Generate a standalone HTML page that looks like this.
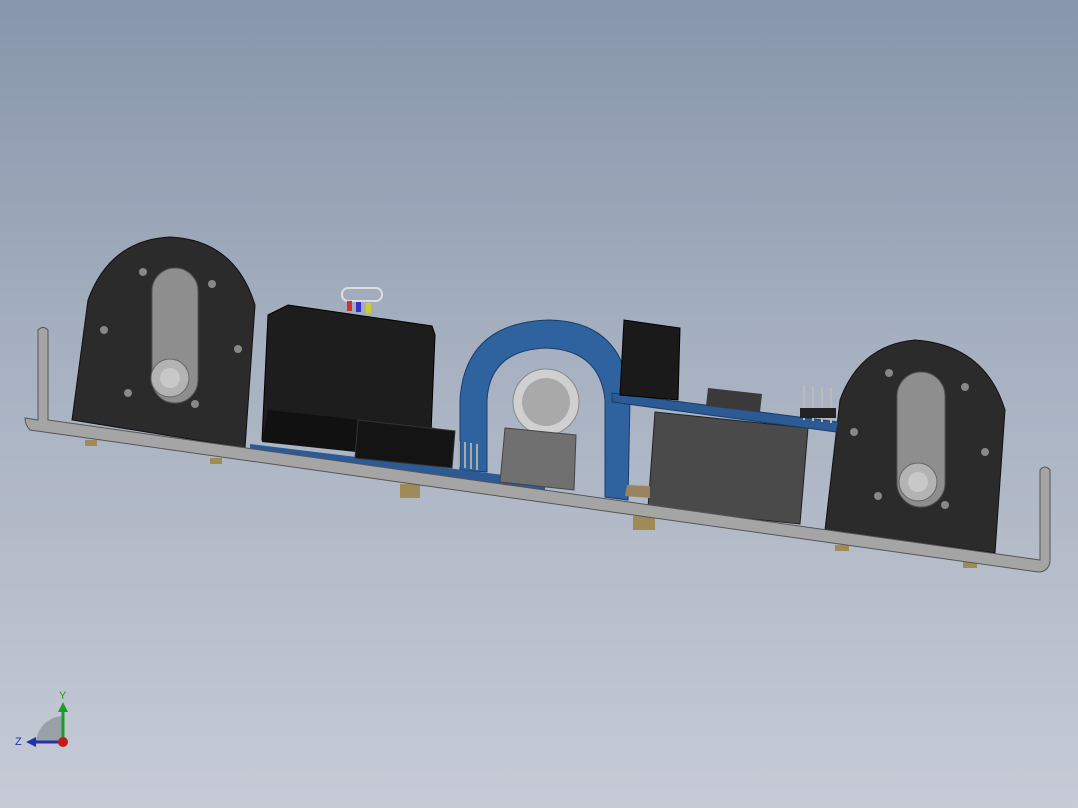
<!DOCTYPE html>
<html><head><style>
html,body{margin:0;padding:0}
body{width:1078px;height:808px;overflow:hidden;background:linear-gradient(#8796ab 0%,#a7b1c1 45%,#c6cbd6 100%);font-family:"Liberation Sans",sans-serif}
svg{position:absolute;left:0;top:0}
</style></head><body>
<svg width="1078" height="808" viewBox="0 0 1078 808">
<!-- left motor mount -->
<path d="M72,420 L88,300 Q110,240 170,237 Q235,240 255,305 L245,448 Z" fill="#2b2b2b" stroke="#111"/>
<rect x="152" y="268" width="46" height="135" rx="23" fill="#8e8e8e" stroke="#555"/>
<circle cx="170" cy="378" r="19" fill="#b3b3b3" stroke="#666"/><circle cx="170" cy="378" r="10" fill="#c8c8c8"/>
<g fill="#888"><circle cx="143" cy="272" r="4"/><circle cx="212" cy="284" r="4"/><circle cx="104" cy="330" r="4"/><circle cx="238" cy="349" r="4"/><circle cx="128" cy="393" r="4"/><circle cx="195" cy="404" r="4"/></g>
<!-- right motor mount -->
<path d="M825,530 L840,400 Q860,345 915,340 Q985,345 1005,410 L995,553 Z" fill="#2b2b2b" stroke="#111"/>
<rect x="897" y="372" width="48" height="135" rx="24" fill="#8e8e8e" stroke="#555"/>
<circle cx="918" cy="482" r="19" fill="#b3b3b3" stroke="#666"/><circle cx="918" cy="482" r="10" fill="#c8c8c8"/>
<g fill="#888"><circle cx="889" cy="373" r="4"/><circle cx="965" cy="387" r="4"/><circle cx="854" cy="432" r="4"/><circle cx="985" cy="452" r="4"/><circle cx="878" cy="496" r="4"/><circle cx="945" cy="505" r="4"/></g>
<!-- blue ring -->
<path d="M460,470 L460,400 Q465,322 550,320 Q625,322 630,400 L628,500 L605,497 L605,400 Q600,350 546,348 Q490,350 487,400 L487,472 Z" fill="#2f63a0" stroke="#1a3c66"/>
<circle cx="546" cy="402" r="33" fill="#d0d0d0" stroke="#888"/><circle cx="546" cy="402" r="24" fill="#a9a9a9"/>
<!-- blue PCB left -->
<path d="M250,444 L545,480 L545,490 L250,452 Z" fill="#2b5a95"/>
<!-- relay box -->
<path d="M288,305 L432,326 L435,335 L430,458 L262,440 L268,315 Z" fill="#1d1d1d" stroke="#000"/>
<path d="M268,410 L435,428 L432,460 L262,442 Z" fill="#111"/>
<path d="M358,420 L455,431 L452,468 L355,458 Z" fill="#141414" stroke="#333"/>
<rect x="342" y="288" width="40" height="13" rx="6" fill="none" stroke="#ddd" stroke-width="2"/>
<rect x="347" y="301" width="5" height="10" fill="#c33"/><rect x="356" y="302" width="5" height="10" fill="#33c"/><rect x="366" y="303" width="5" height="10" fill="#cc3"/>
<g fill="#aaa"><rect x="458" y="441" width="2" height="26"/><rect x="464" y="442" width="2" height="26"/><rect x="470" y="443" width="2" height="26"/><rect x="476" y="444" width="2" height="26"/></g>
<!-- gray box -->
<path d="M505,428 L576,435 L574,490 L500,482 Z" fill="#707070" stroke="#444"/>
<!-- right module -->
<path d="M655,412 L808,428 L800,524 L648,508 Z" fill="#4a4a4a" stroke="#222"/>
<path d="M612,393 L838,422 L836,432 L612,402 Z" fill="#2b5a95" stroke="#1a3c66"/>
<path d="M624,320 L680,328 L678,400 L620,395 Z" fill="#1a1a1a" stroke="#000"/>
<path d="M708,388 L762,394 L760,412 L706,406 Z" fill="#3a3a3a"/>
<g fill="#bbb"><rect x="803" y="385" width="2" height="35"/><rect x="812" y="386" width="2" height="35"/><rect x="821" y="387" width="2" height="35"/><rect x="830" y="388" width="2" height="35"/></g>
<rect x="800" y="408" width="36" height="10" fill="#222"/>
<path d="M627,485 L650,486 L650,498 L625,496 Z" fill="#9a8460"/>
<!-- screws -->
<g fill="#a08a55"><rect x="400" y="484" width="20" height="14"/><rect x="633" y="516" width="22" height="14"/><rect x="85" y="440" width="12" height="6"/><rect x="210" y="458" width="12" height="6"/><rect x="835" y="545" width="14" height="6"/><rect x="963" y="562" width="14" height="6"/></g>
<!-- plate and uprights -->
<path d="M38,330 Q43,325 48,330 L48,420 L1040,560 L1040,470 Q1045,464 1050,470 L1050,562 Q1048,572 1038,572 L30,430 Q25,425 25,418 L38,420 Z" fill="#a5a5a5" stroke="#555"/>
<!-- triad -->
<path d="M36,742 A28,28 0 0 1 62,716 L62,742 Z" fill="#9aa0a8"/>
<line x1="63" y1="742" x2="63" y2="710" stroke="#1c9a2a" stroke-width="3"/><polygon points="58,712 68,712 63,702" fill="#1c9a2a"/>
<line x1="63" y1="742" x2="34" y2="742" stroke="#2233aa" stroke-width="3"/><polygon points="36,737 36,747 26,742" fill="#2233aa"/>
<circle cx="63" cy="742" r="5" fill="#c81818"/>
<text x="59" y="699" font-size="11" fill="#1c9a2a">Y</text>
<text x="15" y="745" font-size="11" fill="#2233aa">Z</text>
</svg>
</body></html>
